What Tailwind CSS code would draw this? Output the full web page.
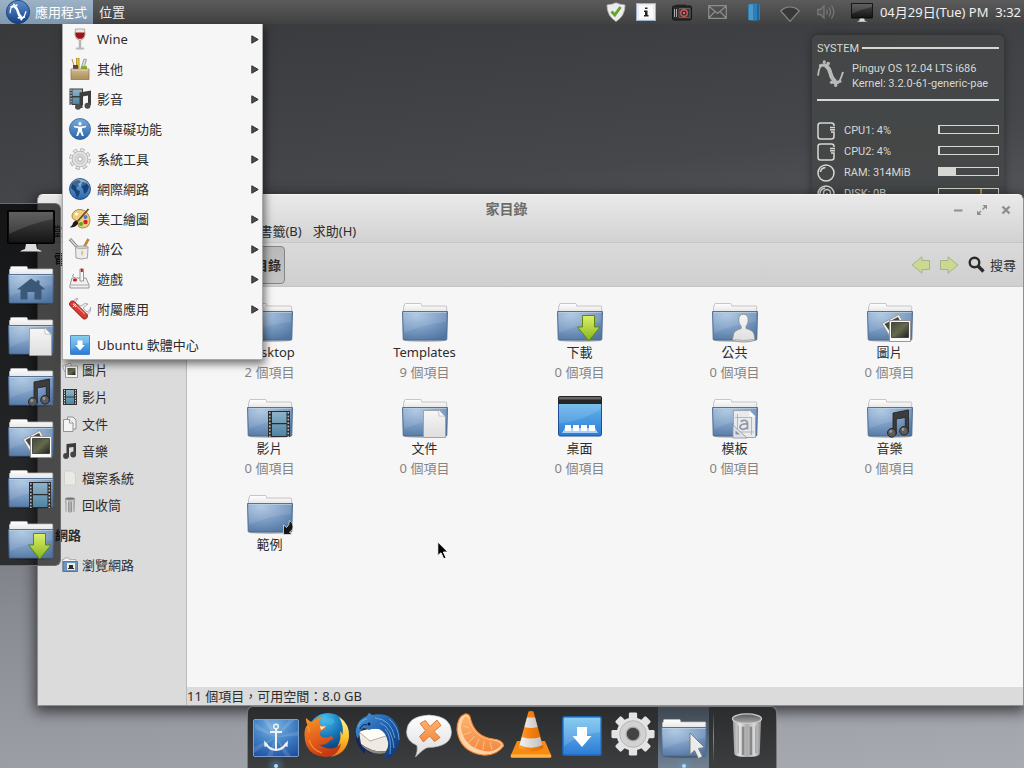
<!DOCTYPE html>
<html lang="zh-Hant">
<head>
<meta charset="utf-8">
<title>家目錄</title>
<script src="https://cdn.jsdelivr.net/npm/@tailwindcss/browser@4"></script>
</head>
<body class="relative h-screen overflow-hidden bg-[linear-gradient(174deg,#37383a_0%,#45474b_26%,#888b92_70%,#a8abb2_100%)] font-['Noto_Sans','Noto_Sans_CJK_TC',sans-serif] text-[13px] leading-5 text-[#2d2d2d]">

<svg class="absolute size-0" aria-hidden="true">
  <defs>
    <radialGradient id="gFolder" cx=".3" cy=".1" r="1"><stop offset="0" stop-color="#a9c5e0"/><stop offset=".55" stop-color="#7899c2"/><stop offset="1" stop-color="#50759f"/></radialGradient>
    <linearGradient id="gPaper" x1="0" y1="0" x2="0" y2="1"><stop offset="0" stop-color="#ffffff"/><stop offset="1" stop-color="#dcdcdc"/></linearGradient>
    <linearGradient id="gDoc" x1="0" y1="0" x2="0" y2="1"><stop offset="0" stop-color="#f6f6f6"/><stop offset="1" stop-color="#dedede"/></linearGradient>
    <linearGradient id="gGreen" x1="0" y1="0" x2="0" y2="1"><stop offset="0" stop-color="#dff06a"/><stop offset="1" stop-color="#86b51c"/></linearGradient>
    <linearGradient id="gFilm" x1="0" y1="0" x2="0" y2="1"><stop offset="0" stop-color="#8fb4c8"/><stop offset="1" stop-color="#4d84a4"/></linearGradient>
    <linearGradient id="gPhoto" x1="0" y1="0" x2="1" y2="1"><stop offset="0" stop-color="#43483a"/><stop offset=".5" stop-color="#646a4d"/><stop offset="1" stop-color="#241c1c"/></linearGradient>
    <linearGradient id="gScreen" x1="0" y1="0" x2="0" y2="1"><stop offset="0" stop-color="#484848"/><stop offset="1" stop-color="#161616"/></linearGradient>
    <linearGradient id="gMetal" x1="0" y1="0" x2="1" y2="0"><stop offset="0" stop-color="#9a9a9a"/><stop offset=".25" stop-color="#e4e4e4"/><stop offset=".5" stop-color="#a9a9a9"/><stop offset=".75" stop-color="#dadada"/><stop offset="1" stop-color="#8a8a8a"/></linearGradient>
    <linearGradient id="gHole" x1="0" y1="0" x2="0" y2="1"><stop offset="0" stop-color="#5a5a5a"/><stop offset="1" stop-color="#a8a8a8"/></linearGradient>
    <linearGradient id="gSky" x1="0" y1="0" x2="0" y2="1"><stop offset="0" stop-color="#74c5ee"/><stop offset="1" stop-color="#2b7ad6"/></linearGradient>
    <linearGradient id="gLogo" x1="0" y1="0" x2="0" y2="1"><stop offset="0" stop-color="#5c8fd0"/><stop offset="1" stop-color="#153f82"/></linearGradient>
    <radialGradient id="gAnchor" cx=".45" cy=".2" r=".95"><stop offset="0" stop-color="#7db4e0"/><stop offset=".5" stop-color="#3f7dc4"/><stop offset="1" stop-color="#1d4a9c"/></radialGradient>
    <radialGradient id="gGlobe" cx=".4" cy=".15" r=".9"><stop offset="0" stop-color="#46c3ee"/><stop offset=".5" stop-color="#1672b8"/><stop offset="1" stop-color="#0b2a5e"/></radialGradient>
    <linearGradient id="gFox" x1="0" y1="0" x2=".4" y2="1"><stop offset="0" stop-color="#f5992b"/><stop offset=".5" stop-color="#e8661c"/><stop offset="1" stop-color="#c63a12"/></linearGradient>
    <linearGradient id="gFlame" x1="0" y1="0" x2="0" y2="1"><stop offset="0" stop-color="#fff3a0"/><stop offset=".5" stop-color="#fbc52c"/><stop offset="1" stop-color="#e8731a"/></linearGradient>
    <linearGradient id="gBird" x1="0" y1="0" x2="1" y2="1"><stop offset="0" stop-color="#4d9ad6"/><stop offset=".5" stop-color="#1f5fae"/><stop offset="1" stop-color="#10316f"/></linearGradient>
    <linearGradient id="gOrange" x1="0" y1="0" x2="0" y2="1"><stop offset="0" stop-color="#ffb36b"/><stop offset="1" stop-color="#f28a42"/></linearGradient>
    <linearGradient id="gCone" x1="0" y1="0" x2="1" y2="0"><stop offset="0" stop-color="#ffa437"/><stop offset=".4" stop-color="#f58212"/><stop offset="1" stop-color="#e06a00"/></linearGradient>
    <linearGradient id="gConeW" x1="0" y1="0" x2="1" y2="0"><stop offset="0" stop-color="#f4f4f4"/><stop offset="1" stop-color="#bdbdbd"/></linearGradient>
    <linearGradient id="gBlueBtn" x1="0" y1="0" x2="0" y2="1"><stop offset="0" stop-color="#78aadb"/><stop offset="1" stop-color="#2a65a8"/></linearGradient>
    <linearGradient id="gBox" x1="0" y1="0" x2="0" y2="1"><stop offset="0" stop-color="#d0b98c"/><stop offset="1" stop-color="#ab8e5c"/></linearGradient>
  </defs>

  <symbol id="folder" viewBox="0 0 46 40">
    <ellipse cx="23" cy="37.6" rx="21" ry="1.4" fill="#000" opacity=".25"/>
    <path d="M1.500 12V3.500l1-.5V1.200Q2.600.5 3.500.5H18.500q.7 0 .8.700l.4 1.800H44q.7 0 .7.700V12z" fill="url(#gPaper)" stroke="#b9b9b9" stroke-width=".8"/>
    <path d="M0.500 8.500H45.500L44.800 36.200q0 .8-.8.8H2q-.8 0-.8-.8z" fill="url(#gFolder)" stroke="#49688f" stroke-width=".9"/>
    <path d="M1.500 9.500H44.500" stroke="#c3d6e8" stroke-width=".9" opacity=".8"/>
    <path d="M1.500 10H44.200L44 19Q22 21 2 30z" fill="#fff" opacity=".1"/>
  </symbol>
  <symbol id="eDown" viewBox="0 0 46 40"><path d="M25.500 12.500H37.500V24H43L31.800 38 20.500 24H25.500z" fill="url(#gGreen)" stroke="#5f8410" stroke-width="1"/></symbol>
  <symbol id="eFilm" viewBox="0 0 46 40"><path d="M21 12H43V38H21z" fill="#2c2c2c"/><path d="M25 13H39.500V24H25zM25 25.300H39.500V37H25z" fill="url(#gFilm)"/><path d="M22.800 13V38M41.300 13V38" stroke="#b7b7b7" stroke-width="1.600" stroke-dasharray="1.800 1.600"/></symbol>
  <symbol id="eDoc" viewBox="0 0 46 40"><path d="M21.500 11.500H37.500L43.500 17.500V38.500H21.500z" fill="url(#gDoc)" stroke="#9d9d9d" stroke-width=".9"/><path d="M36 11.500q1.500 1.500 1 5.500 4-.5 6.500 1L37.500 11.500z" fill="#fff" stroke="#a5a5a5" stroke-width=".6"/></symbol>
  <symbol id="eMusic" viewBox="0 0 46 40"><path d="M26 14 41.500 11V33H38.300V18.500L29.300 20V35H26z" fill="#3c3c3c" stroke="#1f1f1f" stroke-width=".8"/><circle cx="24.800" cy="33.800" r="4.300" fill="#5c5c5c" stroke="#222" stroke-width="1"/><circle cx="37" cy="31.800" r="4.300" fill="#5c5c5c" stroke="#222" stroke-width="1"/><circle cx="23.800" cy="32.500" r="1.400" fill="#999"/><circle cx="36" cy="30.500" r="1.400" fill="#999"/></symbol>
  <symbol id="ePhoto" viewBox="0 0 46 40"><path d="M15 20.500 32 11.500 41 28 25 37z" fill="#f2f2f2" stroke="#8b8b8b" stroke-width=".8"/><path d="M17.500 21 31 14 38 27 26 33z" fill="#47493f"/><path d="M22.500 17.500H43.500V38.500H22.500z" fill="#f8f8f8" stroke="#909090" stroke-width=".9"/><path d="M24.500 19.500H41.500V34.500H24.500z" fill="url(#gPhoto)" stroke="#222" stroke-width=".7"/></symbol>
  <symbol id="ePerson" viewBox="0 0 46 40"><path d="M31.500 11.300q4.700 0 4.700 5.700 0 4-2.200 6.500v2q7.300 2 8 5.500l1 6q-4 2-11.300 2t-11.200-2l1-6q.7-3.500 7.700-5.500v-2q-2.500-2.500-2.500-6.500 0-5.700 4.800-5.700z" fill="url(#gDoc)" stroke="#8f8f8f" stroke-width=".9"/><path d="M23 36.500q8 2 18.500 0" stroke="#aaa" fill="none"/></symbol>
  <symbol id="eTpl" viewBox="0 0 46 40"><path d="M21.500 11.500H37.500L43.500 17.500V38.500H21.500z" fill="#e9eaec" stroke="#9a9fa8" stroke-width=".9"/><path d="M23 18.500H40M23 33H42M25.500 15V36M39.500 18V36" stroke="#a5a9b3" stroke-width=".8"/><path d="M28.500 22.500q6-3 7 1.500v6.500M35.500 25q-7-.5-7.500 3 1 4.500 7.500.5" fill="none" stroke="#9298a5" stroke-width="1.800"/><path d="M21 26 35 39H21z" fill="#dfe1e6" stroke="#8b91a0" stroke-width=".8"/><path d="M23.500 31.500 28 35.500H23.500z" fill="#8b91a0"/><path d="M37.500 11.500V17.500H43.500z" fill="#fff"/></symbol>
  <symbol id="eHome" viewBox="0 0 46 40"><path d="M23 12.500 9 23.500H12.500V33.500H19.500V26H26.500V33.500H33.500V23.500H37.500L31.500 18.500V14.500H28.500V16.300z" fill="#3b5878"/></symbol>
  <symbol id="eLink" viewBox="0 0 46 40"><path d="M36.500 39.500V30l3 2.500Q42.500 30.500 42.500 25.500 46 27 46 32q0 3.500-3.500 5L45 39.500z" fill="#151515" stroke="#eee" stroke-width=".7"/></symbol>
  <symbol id="deskIcon" viewBox="0 0 46 42"><rect x="1.500" y="1.500" width="43" height="39.500" rx="1.800" fill="url(#gSky)" stroke="#1f4f94"/><path d="M2 9H44V14Q20 28 2 28z" fill="#fff" opacity=".12"/><path d="M1 3Q1 1 3 1H43q2 0 2 2V9H1z" fill="#262626"/><path d="M2 3Q2 2 3 2H43q1 0 1 1V4.500H2z" fill="#666"/><path d="M8 33H38L41 38H5z" fill="#a9d2f4"/><path d="M8 30h6v6H8zM16 30h6v6h-6zM24 30h6v6h-6zM32 30h6v6h-6z" fill="#fff"/></symbol>
  <symbol id="monitor" viewBox="0 0 48 42"><rect x=".5" y=".5" width="47" height="33" rx="1" fill="#0b0b0b" stroke="#000"/><path d="M2 2H46V32H2z" fill="url(#gScreen)"/><path d="M2 2H46V9Q22 14 2 24z" fill="#fff" opacity=".13"/><path d="M19 34H29L30 39Q34 40 35 41.500H13Q14 40 18 39z" fill="#dcdcdc"/></symbol>
  <symbol id="wave" viewBox="0 0 26 26"><path d="M1 15Q2 4 7 4q3.500 0 6 9t6 9q3 0 5.500-9" fill="none" stroke="currentColor" stroke-width="1.800"/><path d="M8 5Q12 8 13 13T18 21" fill="none" stroke="currentColor" stroke-width="3.800"/><circle cx="7" cy="1.800" r="1.500" fill="currentColor"/><circle cx="3.300" cy="5.500" r="1.600" fill="currentColor"/><circle cx="10.800" cy="3.300" r="1.700" fill="currentColor"/><circle cx="18" cy="24.300" r="1.600" fill="currentColor"/><circle cx="14" cy="21.500" r="1.600" fill="currentColor"/><circle cx="22" cy="20.500" r="1.600" fill="currentColor"/><circle cx="24.800" cy="12.500" r="1.100" fill="currentColor"/><path d="M4 5H10M15 21.500H21" stroke="currentColor" stroke-width="3"/></symbol>
  <symbol id="software" viewBox="0 0 40 40"><rect x=".8" y=".8" width="38.400" height="38.400" rx="1.500" fill="url(#gSky)" stroke="#1c62b4" stroke-width="1.400"/><path d="M2 2H38V16Q18 18 2 30z" fill="#fff" opacity=".15"/><path d="M15 11H25V20H29.500L20 31 10.500 20H15z" fill="#fff"/></symbol>
  <symbol id="trash" viewBox="0 0 32 46"><path d="M1.500 6 3 42Q3.500 45 16 45T29 42L30.500 6z" fill="url(#gMetal)"/><path d="M12 14V43M20 14V43" stroke="#6f6f6f" stroke-width="2.600" opacity=".7"/><path d="M7 13V41M25 13V41" stroke="#888" stroke-width="1.200" opacity=".6"/><ellipse cx="16" cy="5.800" rx="14.800" ry="4.800" fill="url(#gHole)" stroke="#cdcdcd" stroke-width="1.300"/></symbol>
  <symbol id="gear" viewBox="-24 -24 48 48"><g fill="inherit"><circle r="18"/><g id="teeth2"><rect x="-4.500" y="-23.500" width="9" height="47" rx="1.500"/><rect x="-23.500" y="-4.500" width="47" height="9" rx="1.500"/></g><use href="#teeth2" transform="rotate(45)"/></g><circle r="14.500" fill="#d2d2d2" stroke="#b4b4b4"/></symbol>
  <symbol id="film16" viewBox="0 0 16 16"><path d="M1 0H15V16H1z" fill="#333"/><path d="M4 1H12V7.500H4zM4 8.500H12V15H4z" fill="url(#gFilm)"/><path d="M2.500 1V16M13.500 1V16" stroke="#ddd" stroke-dasharray="1.300 1.200"/></symbol>
  <symbol id="note16" viewBox="0 0 16 16"><path d="M4.500 1 14 0V12H11.500V4L7 4.600V14H4.500z" fill="#3a3a3a"/><circle cx="4" cy="13" r="2.900" fill="#444"/><circle cx="11.200" cy="11.500" r="2.900" fill="#444"/></symbol>
</svg>

<!-- System status widget -->
<aside class="absolute top-[35px] right-5 h-[200px] w-48 rounded-md bg-[#454747]/90 px-[5px] font-[Roboto,'Liberation_Sans',sans-serif] text-[11px] leading-[15px] text-[#d6d8d4] shadow-[0_0_8px_#0006]">
  <div class="flex h-6 items-center gap-[3px] pt-0.5"><h2>SYSTEM</h2><div class="h-0.5 flex-1 bg-[#d6d8d4]"></div></div>
  <div class="flex h-[42px] gap-2 border-b-2 border-[#d6d8d4]">
    <svg class="mt-px size-[27px] text-[#b9bab8]"><use href="#wave"/></svg>
    <p class="pt-0.5">Pinguy OS 12.04 LTS i686<br>Kernel: 3.2.0-61-generic-pae</p>
  </div>
  <div class="mt-[19px] flex flex-col">
    <div class="flex h-[21px] items-center gap-[9px]"><svg class="size-[18px]" viewBox="0 0 18 18" fill="none" stroke="currentColor" stroke-width="1.500"><path d="M17 4V3.500Q17 1 14.500 1H3.500Q1 1 1 3.500V14.500Q1 17 3.500 17H14.500Q17 17 17 14.500V10H14M13 5.500H18M13 7.800H18"/></svg><span class="flex-1">CPU1: 4%</span><div class="mb-0.5 h-[9px] w-[61px] border border-l-2 border-[#d6d8d4]"></div></div>
    <div class="flex h-[21px] items-center gap-[9px]"><svg class="size-[18px]" viewBox="0 0 18 18" fill="none" stroke="currentColor" stroke-width="1.500"><path d="M17 4V3.500Q17 1 14.500 1H3.500Q1 1 1 3.500V14.500Q1 17 3.500 17H14.500Q17 17 17 14.500V10H14M13 5.500H18M13 7.800H18"/></svg><span class="flex-1">CPU2: 4%</span><div class="mb-0.5 h-[9px] w-[61px] border border-l-2 border-[#d6d8d4]"></div></div>
    <div class="flex h-[21px] items-center gap-[9px]"><svg class="size-[18px]" viewBox="0 0 18 18" fill="none" stroke="currentColor" stroke-width="1.500"><circle cx="9" cy="9" r="8"/><path d="M3.500 8Q4 4 8.500 3.500"/></svg><span class="flex-1">RAM: 314MiB</span><div class="mb-0.5 h-[9px] w-[61px] border border-[#d6d8d4]"><div class="h-full w-[17px] bg-[#d6d8d4]"></div></div></div>
    <div class="flex h-[21px] items-center gap-[9px]"><svg class="size-[18px]" viewBox="0 0 18 18" fill="none" stroke="currentColor" stroke-width="1.500"><circle cx="9" cy="9" r="8"/><circle cx="10" cy="8" r="3.500"/><path d="M3 9Q3 4 8 3M10 8V15"/></svg><span class="flex-1">DISK: 0B</span><div class="mb-0.5 flex h-[9px] w-[61px] justify-end border border-[#d6d8d4] pr-4"><div class="h-full w-0.5 bg-[#d98a1f]"></div></div></div>
  </div>
</aside>

<!-- File manager -->
<main class="absolute top-[194px] right-0 bottom-[62px] left-[37px] flex flex-col rounded-t-md border border-[#8f8f8f] border-t-[#f5f5f5] bg-[#dbdbdb] shadow-[0_4px_14px_2px_#0009]">
  <header class="rounded-t-md border-b border-[#c6c6c6] bg-linear-to-b from-[#e9e9e9] to-[#d2d2d2]">
    <div class="relative flex h-[26px] items-center justify-center pt-1 pr-12">
      <h1 class="pb-[3px] text-[14px] font-bold text-[#6b6b6b]">家目錄</h1>
      <div class="absolute right-[11px] flex gap-3 text-[#8e8e8e]">
        <button aria-label="最小化"><svg class="size-3" viewBox="0 0 12 12"><path d="M2 6.500H10.500" stroke="currentColor" stroke-width="2"/></svg></button>
        <button aria-label="最大化"><svg class="size-3" viewBox="0 0 12 12" fill="currentColor"><path d="M6.500 1H11V5.500L9.300 3.800 7 6 6 5 8.200 2.700zM1 6.500V11H5.500L3.800 9.300 5.500 7.500 4.500 6.500 2.700 8.200z"/></svg></button>
        <button aria-label="關閉"><svg class="size-3" viewBox="0 0 12 12"><path d="M2.500 2.500 9.500 9.500M9.500 2.500 2.500 9.500" stroke="currentColor" stroke-width="2.400"/></svg></button>
      </div>
    </div>
    <nav class="flex h-[21px] items-center gap-[11px] pb-0.5 pl-[11px]">
      <button>檔案(F)</button><button>編輯(E)</button><button>檢視(V)</button><button>前往(G)</button><button>書籤(B)</button><button>求助(H)</button>
    </nav>
  </header>
  <div class="flex min-h-0 flex-1">
    <nav class="w-[149px] shrink-0 border-r border-[#bcbcbc] bg-[#dbdbdb]">
      <h2 class="flex h-8 items-center pl-4 font-bold">電腦</h2>
      <a href="#" class="flex h-[27px] items-center gap-1 pl-6"><svg class="size-4"><use href="#folder"/></svg>家目錄</a>
      <a href="#" class="flex h-[27px] items-center gap-1 pl-6"><svg class="size-4"><use href="#deskIcon"/></svg>桌面</a>
      <a href="#" class="flex h-[27px] items-center gap-1 pl-6"><svg class="size-4"><use href="#folder"/></svg>下載</a>
      <a href="#" class="flex h-[27px] items-center gap-1 pl-6"><svg class="size-4" viewBox="0 0 16 16"><path d="M.5 4 8.500 1 10 6 3 10z" fill="#eee" stroke="#888" stroke-width=".7"/><path d="M3.500 4H15.500V15.500H3.500z" fill="#f6f6f6" stroke="#888" stroke-width=".8"/><path d="M5.500 6H13.500V13H5.500z" fill="url(#gPhoto)"/></svg>圖片</a>
      <a href="#" class="flex h-[27px] items-center gap-1 pl-6"><svg class="size-4"><use href="#film16"/></svg>影片</a>
      <a href="#" class="flex h-[27px] items-center gap-1 pl-6"><svg class="size-4" viewBox="0 0 16 16" fill="#eee" stroke="#8a8a8a" stroke-width=".9"><path d="M5.500 1H11L14 4V13H5.500z"/><path d="M1.500 3.500H7.500L11 7V15.500H1.500z" fill="#f4f4f4"/><path d="M7.500 3.500V7H11" fill="#fff"/></svg>文件</a>
      <a href="#" class="flex h-[27px] items-center gap-1 pl-6"><svg class="size-4"><use href="#note16"/></svg>音樂</a>
      <a href="#" class="flex h-[27px] items-center gap-1 pl-6"><svg class="size-4" viewBox="0 0 16 16"><path d="M2.500 1H10L13.500 4V15H2.500z" fill="#e9eae6" stroke="#cdcdc8" stroke-width=".8"/></svg>檔案系統</a>
      <a href="#" class="flex h-[27px] items-center gap-1 pl-6"><svg class="size-4"><use href="#trash"/></svg>回收筒</a>
      <h2 class="flex h-[33px] items-center pl-[17px] font-bold">網路</h2>
      <a href="#" class="flex h-[27px] items-center gap-1 pl-6"><svg class="size-4" viewBox="0 0 16 16"><path d="M.5 2.500H2L2.500 1H7L7.500 2.500H14V14.500H.5z" fill="#f2f2f2" stroke="#999" stroke-width=".7"/><path d="M1 4.500H15.500V14.500H1z" fill="#6f95be" stroke="#456a96" stroke-width=".8"/><path d="M5 6H13V13H5z" fill="#eceee6"/><path d="M7 8H11V11H12V12H6V11H7z" fill="#2b2b2b"/></svg>瀏覽網路</a>
    </nav>
    <section class="flex min-w-0 flex-1 flex-col">
      <div class="flex h-11 shrink-0 items-center border-b border-[#c4c4c4] bg-linear-to-b from-[#dadada] to-[#cfcfcf] pr-[7px] pl-2">
        <button class="flex h-[38px] w-[90px] items-center justify-end rounded-sm border border-[#858585] bg-linear-to-b from-[#b9b9b9] to-[#c4c4c4] pr-[3px] font-bold">家目錄</button>
        <div class="ml-auto flex items-center">
          <button class="w-7" aria-label="上一頁"><svg class="h-[18px] w-5" viewBox="0 0 20 18"><path d="M1 9 11 .8V4.500H18.500V13.500H11V17.200z" fill="#cbd890" stroke="#a3b58a"/></svg></button>
          <button class="w-7" aria-label="下一頁"><svg class="h-[18px] w-5" viewBox="0 0 20 18"><path d="M19 9 9 .8V4.500H1.500V13.500H9V17.200z" fill="#cbd890" stroke="#a3b58a"/></svg></button>
          <button class="ml-px flex items-center gap-[5px]"><svg class="size-[17px]" viewBox="0 0 17 17" fill="none" stroke="#2b2b2b"><circle cx="6.500" cy="6.500" r="4.800" stroke-width="2.400"/><path d="M10 10 15.500 15.500" stroke-width="3.400"/></svg>搜尋</button>
        </div>
      </div>
      <div class="grid min-h-0 flex-1 grid-cols-[repeat(auto-fill,155px)] content-start gap-y-[17px] bg-[#f6f6f6] pt-4 pl-[5px] text-center">
        <figure class="flex flex-col items-center"><svg class="h-10 w-[46px]"><use href="#folder"/></svg><figcaption class="-mt-px">Desktop<p class="text-[#858585]">2 個項目</p></figcaption></figure>
        <figure class="flex flex-col items-center"><svg class="h-10 w-[46px]"><use href="#folder"/></svg><figcaption class="-mt-px">Templates<p class="text-[#858585]">9 個項目</p></figcaption></figure>
        <figure class="flex flex-col items-center"><svg class="h-10 w-[46px]"><use href="#folder"/><use href="#eDown"/></svg><figcaption class="-mt-px">下載<p class="text-[#858585]">0 個項目</p></figcaption></figure>
        <figure class="flex flex-col items-center"><svg class="h-10 w-[46px]"><use href="#folder"/><use href="#ePerson"/></svg><figcaption class="-mt-px">公共<p class="text-[#858585]">0 個項目</p></figcaption></figure>
        <figure class="flex flex-col items-center"><svg class="h-10 w-[46px]"><use href="#folder"/><use href="#ePhoto"/></svg><figcaption class="-mt-px">圖片<p class="text-[#858585]">0 個項目</p></figcaption></figure>
        <figure class="flex flex-col items-center"><svg class="h-10 w-[46px]"><use href="#folder"/><use href="#eFilm"/></svg><figcaption class="-mt-px">影片<p class="text-[#858585]">0 個項目</p></figcaption></figure>
        <figure class="flex flex-col items-center"><svg class="h-10 w-[46px]"><use href="#folder"/><use href="#eDoc"/></svg><figcaption class="-mt-px">文件<p class="text-[#858585]">0 個項目</p></figcaption></figure>
        <figure class="flex flex-col items-center"><svg class="-mt-1 mb-0.5 h-[42px] w-[46px]"><use href="#deskIcon"/></svg><figcaption class="-mt-px">桌面<p class="text-[#858585]">0 個項目</p></figcaption></figure>
        <figure class="flex flex-col items-center"><svg class="h-10 w-[46px]"><use href="#folder"/><use href="#eTpl"/></svg><figcaption class="-mt-px">模板<p class="text-[#858585]">0 個項目</p></figcaption></figure>
        <figure class="flex flex-col items-center"><svg class="h-10 w-[46px]"><use href="#folder"/><use href="#eMusic"/></svg><figcaption class="-mt-px">音樂<p class="text-[#858585]">0 個項目</p></figcaption></figure>
        <figure class="flex flex-col items-center"><svg class="h-10 w-[46px]"><use href="#folder"/><use href="#eLink"/></svg><figcaption class="-mt-px">範例</figcaption></figure>
      </div>
      <footer class="h-[18px] shrink-0 bg-[#dbdbdb] leading-[18px]">11 個項目，可用空間：8.0 GB</footer>
    </section>
  </div>
</main>

<!-- Side dock -->
<nav class="absolute top-[203px] left-0 flex w-[61px] flex-col items-center gap-[11px] rounded-r-md border border-l-0 border-[#6d6d6d] bg-linear-to-b from-black/70 to-black/65 pt-1.5 pb-1 pl-0.5" aria-label="捷徑">
  <a href="#" aria-label="桌面"><svg class="mb-[3px] h-[42px] w-12"><use href="#monitor"/></svg></a>
  <a href="#" aria-label="家目錄"><svg class="h-10 w-[46px]"><use href="#folder"/><use href="#eHome"/></svg></a>
  <a href="#" aria-label="文件"><svg class="h-10 w-[46px]"><use href="#folder"/><use href="#eDoc"/></svg></a>
  <a href="#" aria-label="音樂"><svg class="h-10 w-[46px]"><use href="#folder"/><use href="#eMusic"/></svg></a>
  <a href="#" aria-label="圖片"><svg class="h-10 w-[46px]"><use href="#folder"/><use href="#ePhoto"/></svg></a>
  <a href="#" aria-label="影片"><svg class="h-10 w-[46px]"><use href="#folder"/><use href="#eFilm"/></svg></a>
  <a href="#" aria-label="下載"><svg class="h-10 w-[46px]"><use href="#folder"/><use href="#eDown"/></svg></a>
</nav>

<!-- Top panel -->
<header class="absolute inset-x-0 top-0 flex h-6 items-center bg-linear-to-b from-[#5b5b5b] to-[#414141] pr-[3px] text-[#f0f0f0]">
  <button class="flex h-full items-center gap-[5px] bg-linear-to-b from-[#9db2c6] to-[#7f99b1] pr-1.5 pl-1.5 text-white">
    <svg class="size-6 shrink-0" viewBox="0 0 26 26"><circle cx="13" cy="13" r="12.600" fill="url(#gLogo)" stroke="#12356f" stroke-width=".8"/><g transform="translate(3.500 3.500) scale(.73)" color="#fff"><use href="#wave" width="26" height="26"/></g></svg>應用程式
  </button>
  <button class="px-1.5">位置</button>
  <div class="ml-auto flex items-center">
    <div class="flex w-6 justify-center"><svg class="size-5" viewBox="0 0 20 20"><path d="M10 .8Q14 2.800 19 3 19 14 10 19.500 1 14 1 3 6 2.800 10 .8z" fill="#ececec" stroke="#bbb" stroke-width=".8"/><path d="M5.500 9.500 8.800 13 14.500 5" fill="none" stroke="#67a336" stroke-width="3"/></svg></div>
    <div class="flex w-9 justify-center"><svg class="h-[18px] w-5" viewBox="0 0 20 18"><rect x=".5" y=".5" width="19" height="17" fill="#ececec" stroke="#9db4cf"/><rect x="3" y="2.500" width="14" height="13" fill="#fafafa"/><path d="M9 4.500H11.500V6H9zM8 7.500H11.500V12H12.500V13.500H8V12H9V9H8z" fill="#222"/></svg></div>
    <div class="flex w-9 justify-center"><svg class="h-[17px] w-5" viewBox="0 0 20 17"><path d="M4 .5H14V3H4z" fill="#333"/><rect x=".5" y="2" width="19" height="14" rx="1.500" fill="#2b2b2b" stroke="#151515"/><path d="M2.500 5V13M4.500 5V13" stroke="#aaa"/><path d="M7 4.500H18V13.500H7z" fill="#3a3132" stroke="#777" stroke-width=".7"/><circle cx="12" cy="9" r="3.300" fill="none" stroke="#d85555" stroke-width="1.400"/><circle cx="12" cy="9" r="1" fill="#e88"/></svg></div>
    <div class="flex w-9 justify-center"><svg class="h-[14px] w-[19px]" viewBox="0 0 19 14" fill="none" stroke="#8c8c8c" stroke-width="1.200"><path d="M.7.7H18.300V13.300H.7zM.7 1 9.500 8.500 18.300 1M.7 13 7 6.500M18.300 13 12 6.500"/></svg></div>
    <div class="flex w-9 justify-center"><svg class="h-[18px] w-3" viewBox="0 0 12 18"><path d="M0 1.500Q6-.5 12 1.500V17Q6 18.500 0 17z" fill="#2f7fb6"/><path d="M2 1.500V17M4 1.500V17" stroke="#6cb0dc" stroke-width="1"/><path d="M10 1.500V17" stroke="#1d5c8b" stroke-width="1.500"/></svg></div>
    <div class="flex w-9 justify-center"><svg class="mt-1 h-4 w-5" viewBox="0 0 20 16" fill="#383838" stroke="#888" stroke-width="1.200"><path d="M10 15.300.8 5Q4.500 1 10 1T19.200 5z"/></svg></div>
    <div class="flex w-9 justify-center"><svg class="h-4 w-[18px]" viewBox="0 0 18 16" fill="none" stroke="#777" stroke-width="1.300"><path d="M.8 5.500H3.500L7 2V14L3.500 10.500H.8z" fill="#555"/><path d="M9.500 5.500Q11 8 9.500 10.500M12 3.500Q15 8 12 12.500M14.500 1.500Q19 8 14.500 14.500"/></svg></div>
    <div class="flex w-9 justify-center"><svg class="h-[19px] w-[22px]"><use href="#monitor"/></svg></div>
    <time>04月29日(Tue) PM&nbsp; 3:32</time>
  </div>
</header>

<!-- Application menu -->
<div class="absolute top-6 left-[62px] flex w-[201px] flex-col border border-t-0 border-[#a9a9a9] bg-[#f6f6f6] shadow-[2px_4px_8px_#0008]" role="menu">
  <button role="menuitem" class="flex h-[30px] items-center gap-1.5 pr-[3px] pl-1.5"><svg class="size-[22px]" viewBox="0 0 22 22"><ellipse cx="11" cy="20.500" rx="4.500" ry="1.200" fill="#bbb"/><path d="M6.500 1H15.500Q17.500 11 11.700 12V19H10.300V12Q4.500 11 6.500 1z" fill="#e7e7e7" stroke="#999" stroke-width=".8"/><path d="M6.300 4.500H15.700Q16 11 11 11T6.300 4.500z" fill="#a01414"/></svg><span class="flex-1 text-left">Wine</span><svg class="h-[9px] w-2 fill-[#4c4c4c] stroke-[#2f2f2f]" viewBox="0 0 8 9"><path d="M.8.8 7.200 4.500.8 8.200z"/></svg></button>
  <button role="menuitem" class="flex h-[30px] items-center gap-1.5 pr-[3px] pl-1.5"><svg class="size-[22px]" viewBox="0 0 22 22"><path d="M3 1 6 11M7.500 0H10V10H7.500z" fill="#e8c93c" stroke="#b5962a"/><path d="M15 1 17.500 1.500 15 10H12z" fill="#d7d7d7" stroke="#888" stroke-width=".7"/><path d="M4 7H9V11H4z" fill="#5c3b6a"/><path d="M12 8H18V11H12z" fill="#79b52a"/><path d="M2 11H20V21.500H2z" fill="url(#gBox)" stroke="#94794a" stroke-width=".8"/><path d="M2.500 12H19.500" stroke="#e8d9b5"/></svg><span class="flex-1 text-left">其他</span><svg class="h-[9px] w-2 fill-[#4c4c4c] stroke-[#2f2f2f]" viewBox="0 0 8 9"><path d="M.8.8 7.200 4.500.8 8.200z"/></svg></button>
  <button role="menuitem" class="flex h-[30px] items-center gap-1.5 pr-[3px] pl-1.5"><svg class="size-[22px]" viewBox="0 0 22 22"><path d="M.5.500H14V17H.5z" fill="#3a3a3a"/><path d="M3.500 1.500H13V8H3.500zM3.500 9.500H13V16H3.500z" fill="url(#gFilm)"/><path d="M2 1.500V17" stroke="#ddd" stroke-width="1.200" stroke-dasharray="1.500 1.300"/><path d="M10.500 4.500 22 2.500V17H19V7.500L13.500 8.500V20H10.500z" fill="#3d3d3d"/><circle cx="9" cy="18.800" r="3" fill="#4d4d4d"/><circle cx="18.500" cy="17.800" r="3" fill="#4d4d4d"/></svg><span class="flex-1 text-left">影音</span><svg class="h-[9px] w-2 fill-[#4c4c4c] stroke-[#2f2f2f]" viewBox="0 0 8 9"><path d="M.8.8 7.200 4.500.8 8.200z"/></svg></button>
  <button role="menuitem" class="flex h-[30px] items-center gap-1.5 pr-[3px] pl-1.5"><svg class="size-[22px]" viewBox="0 0 22 22"><circle cx="11" cy="11" r="10.500" fill="url(#gBlueBtn)" stroke="#2a5f9c" stroke-width=".8"/><circle cx="11" cy="5.800" r="1.700" fill="#fff"/><path d="M5 7.800 9.500 8.500H12.500L17 7.800V9.300L13 10.200V12.500L14.800 18H13L11 13.800 9 18H7.200L9 12.500V10.200L5 9.300z" fill="#fff"/></svg><span class="flex-1 text-left">無障礙功能</span><svg class="h-[9px] w-2 fill-[#4c4c4c] stroke-[#2f2f2f]" viewBox="0 0 8 9"><path d="M.8.8 7.200 4.500.8 8.200z"/></svg></button>
  <button role="menuitem" class="flex h-[30px] items-center gap-1.5 pr-[3px] pl-1.5"><svg class="size-[22px]" viewBox="-11 -11 22 22"><circle r="9.200" fill="none" stroke="#a8a8a8" stroke-width="3.200" stroke-dasharray="4.200 3.025"/><circle r="9" fill="none" stroke="#e6e6e6" stroke-width="2" stroke-dasharray="3.200 3.869" stroke-dashoffset="-.5"/><circle r="7.800" fill="#e4e4e4" stroke="#b0b0b0" stroke-width=".8"/><circle r="5" fill="#dadada" stroke="#bdbdbd" stroke-width=".8"/><circle r="2.200" fill="#fff" stroke="#a2a2a2" stroke-width=".9"/></svg><span class="flex-1 text-left">系統工具</span><svg class="h-[9px] w-2 fill-[#4c4c4c] stroke-[#2f2f2f]" viewBox="0 0 8 9"><path d="M.8.8 7.200 4.500.8 8.200z"/></svg></button>
  <button role="menuitem" class="flex h-[30px] items-center gap-1.5 pr-[3px] pl-1.5"><svg class="size-[22px]" viewBox="0 0 22 22"><circle cx="11" cy="11" r="10.500" fill="url(#gBlueBtn)" stroke="#153c70" stroke-width=".8"/><path d="M3 5Q6 2 10 2L12 4 9 6 10 8 7 9 8 12 11 13 10 17 8 20 6 14 2 10zM13 4Q18 4 20 9L18 14 15 16 14 11 12 8z" fill="#174378"/><ellipse cx="10" cy="5" rx="7" ry="3.500" fill="#fff" opacity=".18"/></svg><span class="flex-1 text-left">網際網路</span><svg class="h-[9px] w-2 fill-[#4c4c4c] stroke-[#2f2f2f]" viewBox="0 0 8 9"><path d="M.8.8 7.200 4.500.8 8.200z"/></svg></button>
  <button role="menuitem" class="flex h-[30px] items-center gap-1.5 pr-[3px] pl-1.5"><svg class="size-[22px]" viewBox="0 0 22 22"><path d="M3 7Q5 1 12 1.500 20 3 21 12 21 20 13 20 9 20 9 16 9 12 5 11.500 2.500 10.500 3 7z" fill="#f0cd7c" stroke="#a97f31" stroke-width=".9"/><circle cx="7.500" cy="6" r="1.600" fill="#fff"/><circle cx="16.500" cy="9" r="2" fill="#3c7fd0"/><circle cx="16.500" cy="14" r="2.200" fill="#d42323"/><circle cx="12" cy="16" r="2" fill="#4faa2c"/><path d="M19.500 1 8 14" stroke="#6a4b28" stroke-width="1.800"/><path d="M7 12.500 9.500 15Q7 19.500 .8 19.500 4 17.500 4 15 5 13 7 12.500z" fill="#1c1c1c"/></svg><span class="flex-1 text-left">美工繪圖</span><svg class="h-[9px] w-2 fill-[#4c4c4c] stroke-[#2f2f2f]" viewBox="0 0 8 9"><path d="M.8.8 7.200 4.500.8 8.200z"/></svg></button>
  <button role="menuitem" class="flex h-[30px] items-center gap-1.5 pr-[3px] pl-1.5"><svg class="size-[22px]" viewBox="0 0 22 22"><path d="M1 1 9 10" stroke="#777" stroke-width="3"/><path d="M1.500 1.500 9 10" stroke="#ddd" stroke-width="1.400"/><path d="M19.500 1 14 11" stroke="#b98a3d" stroke-width="2.600"/><path d="M6.500 9H19L18.500 20Q12.500 22 7 20z" fill="#ececec" stroke="#9b9b9b" stroke-width=".9"/><ellipse cx="12.800" cy="9.300" rx="6.200" ry="1.400" fill="#cfcfcf" stroke="#999" stroke-width=".7"/><path d="M13 12 14.500 15 13 18 12 15z" fill="#d9bd88"/></svg><span class="flex-1 text-left">辦公</span><svg class="h-[9px] w-2 fill-[#4c4c4c] stroke-[#2f2f2f]" viewBox="0 0 8 9"><path d="M.8.8 7.200 4.500.8 8.200z"/></svg></button>
  <button role="menuitem" class="flex h-[30px] items-center gap-1.5 pr-[3px] pl-1.5"><svg class="size-[22px]" viewBox="0 0 22 22"><path d="M3 10H17L20 17V20H1V17z" fill="#f0f0f0" stroke="#8c8c8c" stroke-width=".9"/><path d="M1.500 17H19.500" stroke="#999" stroke-width=".8"/><path d="M11 1H14.500V13H11z" fill="#f7f7f7" stroke="#8c8c8c" stroke-width=".9"/><path d="M11.800.8H13.800V4H11.800z" fill="#cc1717"/><ellipse cx="6" cy="12" rx="2" ry="1.600" fill="#cc1717"/><path d="M6 10Q2 8 5 6" fill="none" stroke="#999"/></svg><span class="flex-1 text-left">遊戲</span><svg class="h-[9px] w-2 fill-[#4c4c4c] stroke-[#2f2f2f]" viewBox="0 0 8 9"><path d="M.8.8 7.200 4.500.8 8.200z"/></svg></button>
  <button role="menuitem" class="flex h-[30px] items-center gap-1.5 pr-[3px] pl-1.5"><svg class="size-[22px]" viewBox="0 0 22 22"><path d="M4 6Q4 1 9 0L6 5 12 8Q16 4 19 6L14 10 18 14Q22 12 22 9 22 15 17 17z" fill="#eee" stroke="#999" stroke-width=".8"/><path d="M3.500 6 15.500 18" stroke="#8e1a1a" stroke-width="6.600" stroke-linecap="round"/><path d="M3.500 6 15.500 18" stroke="#d93a32" stroke-width="5.200" stroke-linecap="round"/><path d="M4.500 5 16 16" stroke="#f08a7c" stroke-width="1.200"/><path d="M4 9 7 6M4 6 7 9" stroke="#fff" stroke-width=".9"/></svg><span class="flex-1 text-left">附屬應用</span><svg class="h-[9px] w-2 fill-[#4c4c4c] stroke-[#2f2f2f]" viewBox="0 0 8 9"><path d="M.8.8 7.200 4.500.8 8.200z"/></svg></button>
  <button role="menuitem" class="mt-1.5 flex h-[29px] items-center gap-1.5 pr-[3px] pl-1.5"><svg class="size-[22px] p-px"><use href="#software"/></svg><span>Ubuntu 軟體中心</span></button>
</div>

<!-- Bottom dock -->
<nav class="absolute inset-x-0 bottom-0 mx-auto flex h-[62px] w-fit rounded-t-md border border-b-0 border-[#77797c] bg-linear-to-b from-[#2b2c2e] to-[#3d3e40] px-0.5" aria-label="應用程式">
  <a href="#" class="relative flex w-[51px] justify-center pt-3" aria-label="Docky"><svg class="h-[38px] w-[46px]" viewBox="0 0 46 38"><rect x=".5" y=".5" width="45" height="37" rx="1.500" fill="url(#gAnchor)" stroke="#8db5e2" stroke-width=".8"/><path d="M23 18 2 4V10zM23 18 10 1H16zM23 18 36 1H42zM23 18 45 12V17zM23 18 1 28V34zM23 18 14 37H20zM23 18 32 37H38z" fill="#fff" opacity=".13"/><g fill="none" stroke="#f1f1f1" stroke-width="2"><circle cx="23" cy="7.500" r="2.300" stroke-width="1.500"/><path d="M23 10V30M17 13H29M12.500 24Q15 30 23 31 31 30 33.500 24"/></g><path d="M11 21.500 15.500 26.500 11.500 28zM35 21.500 30.500 26.500 34.500 28z" fill="#f1f1f1"/></svg><i class="absolute bottom-0 size-1 rounded-full bg-[#a9dcff] shadow-[0_0_6px_4px_#5fa8dc66]"></i></a>
  <a href="#" class="flex w-[51px] justify-center pt-[5px]" aria-label="Firefox"><svg class="size-[46px]" viewBox="0 0 46 46"><circle cx="24" cy="21.500" r="20.500" fill="url(#gGlobe)"/><path d="M19 5Q23 8 28 6L31 10 27 13 22 11 18 12z" fill="#49b5e2" opacity=".6"/><path d="M35 5Q46 12 45 25 43 42 26 45 35 40 36 33L33 35Q38 27 36 19 38 21 38.500 23 40 13 35 5z" fill="url(#gFlame)"/><path d="M2 6Q5 9 8 10 13 5 18 5 15 8 15.500 12 18 14 22 13.500 22 17 17 19 15.500 21 16.500 24 21 27 27 24 30 25 29 27 26 28 24 30.500 20 34 15 32.500 21 37 28 36.500 34 35.500 37 31 36 39 29 43.500 20 47 10 42 0 36 .500 21 1 15 3.500 13 1.500 10 2 6z" fill="url(#gFox)"/><path d="M16 14Q20 15.500 22 13.500 20 17 17 18z" fill="#fff2dc"/><path d="M3 14Q6 16 5 20M5 28Q8 38 18 41" stroke="#f9a93a" stroke-width="1.200" fill="none" opacity=".7"/></svg></a>
  <a href="#" class="flex w-[51px] justify-center pt-[5px]" aria-label="Thunderbird"><svg class="size-[46px]" viewBox="0 0 46 46"><path d="M2 14Q-3 30 10 42L10 38 17 42 15 36 4 30z" fill="#12275c"/><path d="M4 20 32 16 35 32 31 39Q18 41 6 32z" fill="#efebe2"/><path d="M4 20Q16 14 33 18L34 23 15 29z" fill="#fffdf7"/><path d="M4 20 15 29 34 23" fill="none" stroke="#aaa69c" stroke-width=".9"/><path d="M6 32Q18 41 31 39L30 41Q18 44 8 35z" fill="#8f8a82"/><path d="M1 17Q3 7 12 4L14 .8 17 3Q36-1 43 15 49 33 35 46L27 46Q34 39 33 30 31 20 24 17 18 16 14 18 8 13 5 20 4 22 3 27 0 23 1 17z" fill="url(#gBird)"/><path d="M20 6Q36 7 40 26M25 11Q37 15 39 36M30 17Q37 24 35 42M3 15Q6 8 12 7M34 7Q44 15 44 28" fill="none" stroke="#7cc0ee" stroke-width="1" opacity=".7"/><path d="M5 17Q8 11 12 13" fill="none" stroke="#12306e" stroke-width="1.200"/><circle cx="14" cy="12" r="1.500" fill="#0c1b3c"/></svg></a>
  <a href="#" class="flex w-[51px] justify-center pt-[7px]" aria-label="Empathy"><svg class="h-[44px] w-[46px]" viewBox="0 0 46 44"><path d="M23 1Q45 2 45.500 18 45 33 22 33.500 18 34 9.500 43 12 36 11 31.500 .5 27 .5 18 1 2 23 1z" fill="url(#gPaper)" stroke="#bcbcbc" stroke-width=".6"/><path d="M14 9.500 19.500 6.500 24 12.500 31 6 35 11.500 28 17.500 34 23.500 28.500 27.500 23.500 22 17.500 28 13.500 22.500 19.500 16.500z" fill="url(#gOrange)" stroke="#d7671d" stroke-width=".8"/></svg></a>
  <a href="#" class="flex w-[51px] justify-center pt-[5px]" aria-label="Clementine"><svg class="h-[46px] w-12" viewBox="0 0 48 46"><path d="M1 18Q1 5 9 2 14 1 15 9 20 25 37 27 47 28 47.500 34 40 44 27 43 4 40 1 18z" fill="#ffd2a8" stroke="#f3842e" stroke-width="1.200"/><path d="M5 16Q6 6 10 4 13 6 14.500 12 20 26 37 28.500 44 29 45.500 33 39 41 28 39 8 35 5 16z" fill="url(#gOrange)"/><path d="M13 16 7 14M15 20 7 23M19 24 12 31M23 27 19 36M28 29 27 38M34 30 36 38" stroke="#ffcf9f" stroke-width=".7"/></svg></a>
  <a href="#" class="flex w-[51px] justify-center pt-1" aria-label="VLC"><svg class="h-[47px] w-[42px]" viewBox="0 0 42 47"><path d="M7 30H35L41.500 45Q41.500 47 40 47H2Q.5 47 .5 45z" fill="#f78a10"/><path d="M1 43.500H41V46H1z" fill="#ffb347"/><path d="M18.500.5Q21-.5 23.500.5L33.500 37Q21 44 8.500 37z" fill="url(#gCone)"/><path d="M17 6.500H25L27.500 16Q21 18 14.500 16zM12 26Q21 29 30 26L32.500 34Q21 39.500 9.500 34z" fill="url(#gConeW)"/></svg></a>
  <a href="#" class="flex w-[51px] justify-center pt-[9px]" aria-label="軟體中心"><svg class="size-10"><use href="#software"/></svg></a>
  <a href="#" class="flex w-[51px] justify-center pt-[5px]" aria-label="設定"><svg class="size-11 fill-[#e4e4e4]" viewBox="-24 -24 48 48"><use href="#gear" x="-24" y="-24" width="48" height="48"/><circle r="7.500" fill="#424345" stroke="#aaa" stroke-width="1.500"/></svg></a>
  <a href="#" class="relative flex w-[51px] justify-center bg-linear-to-b from-[#3e4650] to-[#728395] pt-3" aria-label="檔案"><svg class="h-[42px] w-[46px]" viewBox="0 0 46 42"><use href="#folder" width="46" height="40"/><path d="M29 14 43.500 28.500 37.500 29.500 41.500 37.500 37.500 39.500 33.500 31.500 29 35.500z" fill="#ebebeb" stroke="#777" stroke-width=".9"/></svg><i class="absolute bottom-0 size-1 rounded-full bg-[#a9dcff] shadow-[0_0_6px_3px_#5fa8dc66]"></i></a>
  <div class="my-1 mr-[5px] ml-1 w-px bg-linear-to-b from-transparent via-[#8b8b8b] to-transparent"></div>
  <a href="#" class="flex w-[55px] justify-center pt-1.5" aria-label="回收筒"><svg class="h-[45px] w-8"><use href="#trash"/></svg></a>
</nav>

<!-- Mouse pointer -->
<svg class="pointer-events-none absolute top-[541px] left-[437px] h-[19px] w-3" viewBox="0 0 12 19"><path d="M.8 1V14.500L4 11.800 6.800 17.800 9 16.800 6.300 11H10.800z" fill="#000" stroke="#fff" stroke-width=".9"/></svg>
</body>
</html>
